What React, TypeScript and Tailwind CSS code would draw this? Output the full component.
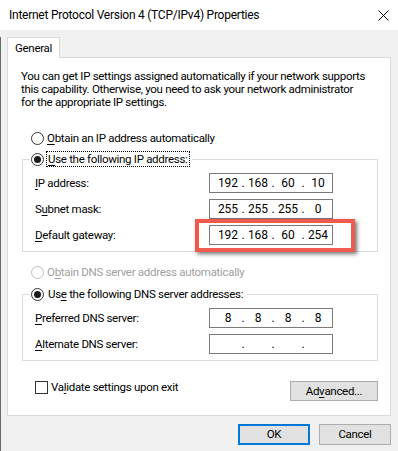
import type { ReactNode } from 'react'

function Radio({ checked = false, disabled = false }: { checked?: boolean; disabled?: boolean }) {
  return (
    <span
      className={`flex h-[13px] w-[13px] shrink-0 items-center justify-center rounded-full border bg-white ${disabled ? 'border-[#bcbcbc]' : 'border-[#333333]'}`}
    >
      {checked && <span className="h-[7px] w-[7px] rounded-full bg-[#1a1a1a]" />}
    </span>
  )
}

function U({ children }: { children: ReactNode }) {
  return <span className="underline decoration-1 underline-offset-[2px]">{children}</span>
}

function IpBox({ parts }: { parts: string[] }) {
  return (
    <div className="flex h-[20px] w-[124px] items-center border border-[#7a7a7a] bg-white pl-[7px] text-[12px] tracking-normal">
      {parts.map((p, i) => (
        <div key={i} className="flex items-center">
          {i > 0 && <span className="w-[8px] text-center">.</span>}
          <span className="w-[22px] text-center">{p}</span>
        </div>
      ))}
    </div>
  )
}

function Row({ label, children }: { label: ReactNode; children: ReactNode }) {
  return (
    <div className="flex h-[20px] items-center">
      <span className="w-[174px]">{label}</span>
      {children}
    </div>
  )
}

export default function App() {
  return (
    <div className="h-[451px] w-[398px] overflow-hidden bg-[#f0f0f0] font-['Roboto',sans-serif] text-[11.5px] leading-[15px] tracking-[-0.3px] text-black">
      {/* Title bar */}
      <div className="flex h-[30px] items-center justify-between bg-white pl-[9px] pr-[9px]">
        <span className="text-[12px] tracking-[-0.25px]">Internet Protocol Version 4 (TCP/IPv4) Properties</span>
        <svg width="11" height="11" viewBox="0 0 11 11" className="mt-[1px]">
          <path d="M0.5 0.5 L10.5 10.5 M10.5 0.5 L0.5 10.5" stroke="#000" strokeWidth="1" fill="none" />
        </svg>
      </div>

      <div className="h-[421px] border-l border-[#6a6a6a] pl-[6px] pr-[7px]">
        {/* Tab */}
        <div className="relative z-10 mb-[-1px] mt-[7px] flex h-[21px] w-[53px] items-center border-x border-t border-[#d9d9d9] bg-white pl-[7px]">
          General
        </div>

        {/* Tab panel */}
        <div className="flex h-[359px] w-[384px] flex-col border border-[#d9d9d9] bg-white pl-[13px] pr-[12px] pt-[12px]">
          <p className="whitespace-nowrap leading-[13px]">
            You can get IP settings assigned automatically if your network supports
            <br />
            this capability. Otherwise, you need to ask your network administrator
            <br />
            for the appropriate IP settings.
          </p>

          <label className="ml-[10px] mt-[22px] flex h-[15px] items-center gap-[3px]">
            <Radio />
            <span>
              <U>O</U>btain an IP address automatically
            </span>
          </label>

          <fieldset className="ml-[1px] mt-[5px] w-[356px] border border-[#dcdcdc] px-[7px] pb-[6px] pt-[6px]">
            <legend className="pl-[1px] pr-[2px]">
              <span className="flex h-[16px] items-center gap-[2px]">
                <Radio checked />
                <span className="border border-dotted border-black px-[1px] leading-[14px]">
                  <U>U</U>se the following IP address:
                </span>
              </span>
            </legend>
            <div className="ml-[5px] flex flex-col gap-[6px]">
              <Row
                label={
                  <>
                    <U>I</U>P address:
                  </>
                }
              >
                <IpBox parts={['192', '168', '60', '10']} />
              </Row>
              <Row
                label={
                  <>
                    S<U>u</U>bnet mask:
                  </>
                }
              >
                <IpBox parts={['255', '255', '255', '0']} />
              </Row>
              <Row
                label={
                  <>
                    <U>D</U>efault gateway:
                  </>
                }
              >
                <div className="relative">
                  <IpBox parts={['192', '168', '60', '254']} />
                  <div className="pointer-events-none absolute bottom-[-7px] left-[-14px] right-[-22px] top-[-6px] border-[4px] border-[#ef5a4e] shadow-[2px_2px_4px_rgba(0,0,0,0.55)]" />
                </div>
              </Row>
            </div>
          </fieldset>

          <label className="ml-[10px] mt-[13px] flex h-[15px] items-center gap-[3px] text-[#a0a0a0]">
            <Radio disabled />
            <span>
              O<U>b</U>tain DNS server address automatically
            </span>
          </label>

          <fieldset className="ml-[1px] mt-[6px] w-[356px] border border-[#dcdcdc] px-[7px] pb-[6px] pt-[6px]">
            <legend className="pl-[1px] pr-[2px]">
              <span className="flex h-[16px] items-center gap-[2px]">
                <Radio checked />
                <span className="border border-transparent px-[1px] leading-[14px]">
                  Us<U>e</U> the following DNS server addresses:
                </span>
              </span>
            </legend>
            <div className="ml-[5px] flex flex-col gap-[6px]">
              <Row
                label={
                  <>
                    <U>P</U>referred DNS server:
                  </>
                }
              >
                <IpBox parts={['8', '8', '8', '8']} />
              </Row>
              <Row
                label={
                  <>
                    <U>A</U>lternate DNS server:
                  </>
                }
              >
                <IpBox parts={['', '', '', '']} />
              </Row>
            </div>
          </fieldset>

          <div className="mt-[20px] flex items-start justify-between">
            <label className="ml-[14px] flex h-[13px] items-center gap-[3px]">
              <span className="h-[13px] w-[13px] border border-[#333333] bg-white" />
              <span>
                Va<U>l</U>idate settings upon exit
              </span>
            </label>
            <button className="flex h-[20px] w-[88px] items-center justify-center border border-[#adadad] bg-[#e1e1e1]">
              Ad<U>v</U>anced...
            </button>
          </div>
        </div>

        {/* Dialog buttons */}
        <div className="mt-[8px] flex justify-end gap-[9px]">
          <button className="flex h-[21px] w-[72px] items-center justify-center border-2 border-[#0078d7] bg-[#e1e1e1]">
            OK
          </button>
          <button className="flex h-[21px] w-[72px] items-center justify-center border border-[#adadad] bg-[#e1e1e1]">
            Cancel
          </button>
        </div>
      </div>
    </div>
  )
}
